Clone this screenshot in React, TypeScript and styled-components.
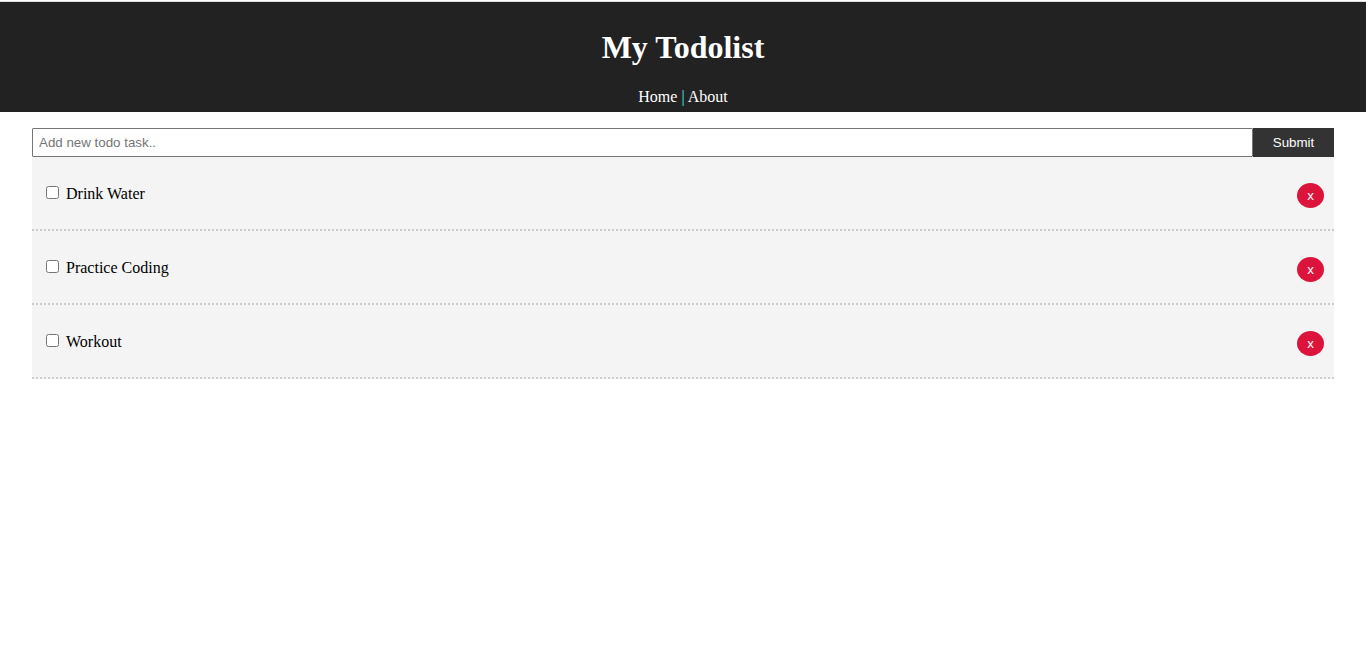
import React, { useState } from "react";
import styled, { createGlobalStyle } from "styled-components";

const GlobalStyle = createGlobalStyle`
  * { box-sizing: border-box; }
  body {
    margin: 0;
    background: #fff;
    color: #000;
    font-family: "Liberation Serif", "Times New Roman", serif;
    font-size: 16px;
    line-height: 18px;
  }
  input, button {
    font-family: "Liberation Sans", Arial, sans-serif;
  }
`;

const Page = styled.div`
  padding-top: 1px;
`;

const Header = styled.header`
  display: flex;
  flex-direction: column;
  align-items: center;
  gap: 22px;
  padding: 27px 0 6px;
  border-top: 1px solid #dadce0;
  background: #222;
  color: #fff;
`;

const Title = styled.h1`
  margin: 0;
  font-size: 32px;
  line-height: 37px;
`;

const Nav = styled.nav`
  color: #40f4ff;
`;

const NavLink = styled.a`
  color: #fff;
  text-decoration: none;
`;

const Main = styled.main`
  padding: 16px 32px;
`;

const AddForm = styled.form`
  display: flex;
`;

const TaskInput = styled.input`
  flex: 1;
  min-width: 0;
  height: 29px;
  margin: 0;
  padding: 5px 6px;
  border: 1px solid #767676;
  border-radius: 1px;

  &::placeholder { color: #757575; }
`;

const SubmitButton = styled.button`
  width: 81px;
  padding: 0;
  border: none;
  background: #333;
  color: #fff;
`;

const TodoList = styled.ul`
  margin: 0;
  padding: 0;
  list-style: none;
`;

const TodoRow = styled.li`
  display: flex;
  align-items: flex-start;
  justify-content: space-between;
  padding: 26px 10px 21px;
  border-bottom: 2px dotted #ccc;
  background: #f4f4f4;
`;

const TodoLabel = styled.label<{ $done: boolean }>`
  display: flex;
  align-items: flex-start;
  gap: 7px;
  line-height: 22px;
  text-decoration: ${({ $done }) => ($done ? "line-through" : "none")};
`;

const Checkbox = styled.input`
  width: 13px;
  height: 13px;
  margin: 3px 0 0 4px;
`;

const DeleteButton = styled.button`
  width: 27px;
  height: 25px;
  padding: 0;
  border: none;
  border-radius: 50%;
  background: #dc143c;
  color: #fff;
`;

interface Todo {
  id: number;
  title: string;
  done: boolean;
}

const initialTodos: Todo[] = [
  { id: 1, title: "Drink Water", done: false },
  { id: 2, title: "Practice Coding", done: false },
  { id: 3, title: "Workout", done: false },
];

export default function App() {
  const [todos, setTodos] = useState(initialTodos);
  const [draft, setDraft] = useState("");

  const add = (event: React.FormEvent) => {
    event.preventDefault();
    if (!draft.trim()) return;
    setTodos([...todos, { id: Date.now(), title: draft, done: false }]);
    setDraft("");
  };
  const toggle = (id: number) =>
    setTodos(todos.map((t) => (t.id === id ? { ...t, done: !t.done } : t)));
  const remove = (id: number) => setTodos(todos.filter((t) => t.id !== id));

  return (
    <Page>
      <GlobalStyle />
      <Header>
        <Title>My Todolist</Title>
        <Nav>
          <NavLink href="#home">Home</NavLink> | <NavLink href="#about">About</NavLink>
        </Nav>
      </Header>
      <Main>
        <AddForm onSubmit={add}>
          <TaskInput
            type="text"
            aria-label="New todo task"
            placeholder="Add new todo task.."
            value={draft}
            onChange={(e) => setDraft(e.target.value)}
          />
          <SubmitButton type="submit">Submit</SubmitButton>
        </AddForm>
        <TodoList>
          {todos.map((todo) => (
            <TodoRow key={todo.id}>
              <TodoLabel $done={todo.done}>
                <Checkbox type="checkbox" checked={todo.done} onChange={() => toggle(todo.id)} />
                {todo.title}
              </TodoLabel>
              <DeleteButton type="button" aria-label={`Delete ${todo.title}`} onClick={() => remove(todo.id)}>
                x
              </DeleteButton>
            </TodoRow>
          ))}
        </TodoList>
      </Main>
    </Page>
  );
}
